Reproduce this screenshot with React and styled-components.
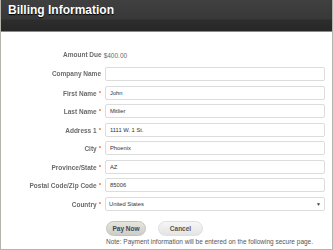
import styled, { createGlobalStyle } from "styled-components";

const GlobalStyle = createGlobalStyle`
  body {
    margin: 0;
    background: #fff;
    font-family: "Liberation Sans", Arial, sans-serif;
  }
`;

const Frame = styled.div`
  width: 333px;
  height: 250px;
  box-sizing: border-box;
  border: 1px solid #b4b4ac;
  border-top: none;
  overflow: hidden;
`;

const Header = styled.div`
  height: 32px;
  margin-left: -1px;
  padding-left: 8px;
  box-sizing: border-box;
  background: linear-gradient(#404040 0%, #383838 62%, #2d2d2d 64%, #272727 100%);
  border-bottom: 1px solid #8a8a86;
  display: flex;
  align-items: flex-start;
`;

const Title = styled.h1`
  margin: 3px 0 0;
  font-size: 12px;
  line-height: 14px;
  font-weight: bold;
  color: #fff;
  text-shadow: 0 1px 1px #000;
`;

const Form = styled.div`
  display: flex;
  flex-direction: column;
  gap: 4px;
  padding-top: 18px;
`;

const Row = styled.div`
  display: grid;
  grid-template-columns: 101px 220px;
  column-gap: 3px;
  align-items: center;
  height: 14px;
  margin-top: ${(p) => (p.$nudge ? 1 : 0)}px;
`;

const AmountRow = styled.div`
  display: flex;
  align-items: center;
  height: 10px;
  padding-left: 62px;
  gap: 1px;
  margin-bottom: 3px;
`;

const Label = styled.div`
  text-align: right;
  padding-right: 1px;
  font-size: 6.5px;
  line-height: 8px;
  font-weight: bold;
  color: #6a6a6a;
  white-space: nowrap;
  will-change: transform;
`;

const Value = styled.span`
  font-size: 6.5px;
  color: #6a6a6a;
`;

const Star = styled.span`
  color: #e8602c;
  font-size: 6px;
  margin-left: 2px;
  vertical-align: 1px;
`;

const TextField = styled.input`
  display: block;
  box-sizing: border-box;
  width: 220px;
  height: 14px;
  margin: 0;
  padding: 0 4px;
  border: 1px solid #dcdcdc;
  border-radius: 2px;
  background: #fff;
  font-family: "Liberation Sans", Arial, sans-serif;
  font-size: 5.8px;
  color: #333;
  outline: none;
`;

const SelectWrap = styled.div`
  position: relative;
  width: 220px;
  height: 14px;
`;

const Select = styled.select`
  display: block;
  box-sizing: border-box;
  width: 100%;
  height: 14px;
  margin: 0;
  padding: 0 3px;
  appearance: none;
  border: 1px solid #dcdcdc;
  border-radius: 2px;
  background: #fff;
  font-family: "Liberation Sans", Arial, sans-serif;
  font-size: 5.8px;
  line-height: 12px;
  color: #333;
  outline: none;
`;

const Arrow = styled.span`
  position: absolute;
  right: 4px;
  top: 4px;
  font-size: 5px;
  line-height: 6px;
  color: #444;
  pointer-events: none;
`;

const Actions = styled.div`
  display: flex;
  gap: 12px;
  margin-top: 6px;
  padding-left: 105px;
`;

const Button = styled.button`
  box-sizing: border-box;
  width: ${(p) => (p.$primary ? 40 : 45)}px;
  height: 15px;
  padding: 0;
  border-radius: 8px;
  border: 1px solid ${(p) => (p.$primary ? "#c4c4bc" : "#e0e0e0")};
  background: ${(p) =>
    p.$primary
      ? "linear-gradient(#e6e6de, #cdcdc5)"
      : "linear-gradient(#f6f6f6, #e4e4e4)"};
  font-family: "Liberation Sans", Arial, sans-serif;
  font-size: 6.5px;
  font-weight: bold;
  color: ${(p) => (p.$primary ? "#3c4660" : "#555")};
`;

const Note = styled.p`
  margin: 2px 0 0;
  padding-left: 105px;
  font-size: 6.5px;
  line-height: 8px;
  color: #555;
  white-space: nowrap;
`;

const fields = [
  { label: "Company Name", value: "", required: false },
  { label: "First Name", value: "John", required: true },
  { label: "Last Name", value: "Mitlier", required: true },
  { label: "Address 1", value: "1111 W. 1 St.", required: true },
  { label: "City", value: "Phoenix", required: true },
  { label: "Province/State", value: "AZ", required: true },
  { label: "Postal Code/Zip Code", value: "85006", required: true },
];

const App = () => {
  return (
    <>
      <GlobalStyle />
      <Frame>
        <Header>
          <Title>Billing Information</Title>
        </Header>
        <Form>
          <AmountRow>
            <Label>Amount Due</Label>
            <Value>$400.00</Value>
          </AmountRow>
          {fields.map((f, i) => (
            <Row key={f.label} $nudge={i % 2 === 1}>
              <Label>
                {f.label}
                {f.required && <Star>*</Star>}
              </Label>
              <TextField value={f.value} readOnly />
            </Row>
          ))}
          <Row $nudge>
            <Label>
              Country<Star>*</Star>
            </Label>
            <SelectWrap>
              <Select value="US" onChange={() => {}}>
                <option value="US">United States</option>
              </Select>
              <Arrow>▼</Arrow>
            </SelectWrap>
          </Row>
          <Actions>
            <Button $primary>Pay Now</Button>
            <Button>Cancel</Button>
          </Actions>
        </Form>
        <Note>Note: Payment information will be entered on the following secure page.</Note>
      </Frame>
    </>
  );
};

export default App;
